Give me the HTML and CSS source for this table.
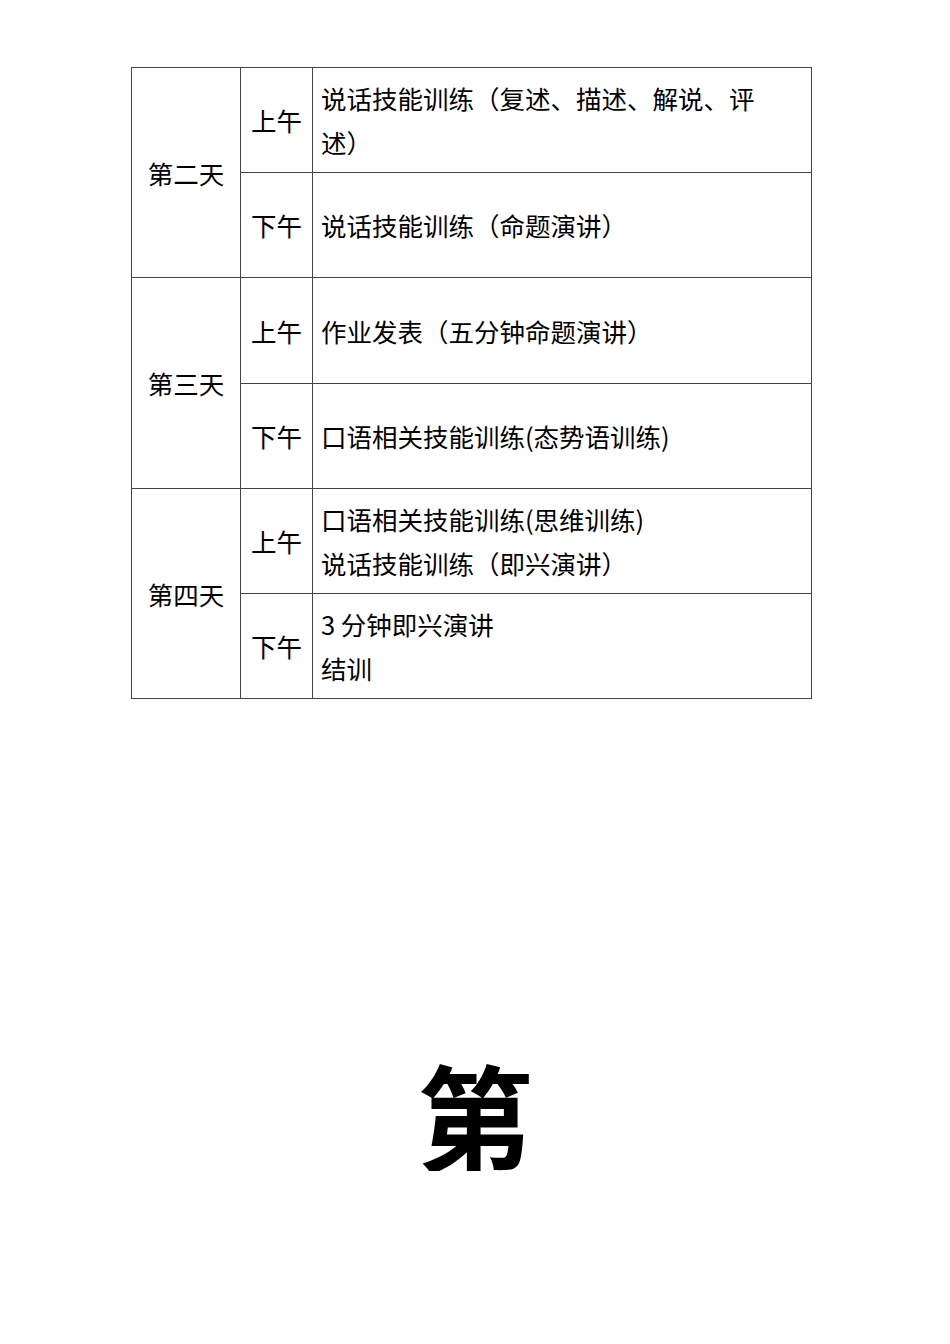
FILE: index.html
```html
<!DOCTYPE html>
<html lang="zh-CN">
<head>
<meta charset="utf-8">
<title>培训日程</title>
<link rel="stylesheet" href="styles.css">
</head>
<body>
<div class="page">
  <table class="schedule">
    <colgroup>
      <col class="c-day">
      <col class="c-half">
      <col class="c-content">
    </colgroup>
    <tbody>
      <tr>
        <td class="day" rowspan="2">第二天</td>
        <td class="half">上午</td>
        <td class="content"><p>说话技能训练（复述、描述、解说、评述）</p></td>
      </tr>
      <tr>
        <td class="half">下午</td>
        <td class="content"><p>说话技能训练（命题演讲）</p></td>
      </tr>
      <tr class="tall">
        <td class="day" rowspan="2">第三天</td>
        <td class="half">上午</td>
        <td class="content"><p>作业发表（五分钟命题演讲）</p></td>
      </tr>
      <tr>
        <td class="half">下午</td>
        <td class="content"><p>口语相关技能训练(态势语训练)</p></td>
      </tr>
      <tr>
        <td class="day" rowspan="2">第四天</td>
        <td class="half">上午</td>
        <td class="content"><p>口语相关技能训练(思维训练)</p><p>说话技能训练（即兴演讲）</p></td>
      </tr>
      <tr>
        <td class="half">下午</td>
        <td class="content"><p>3 分钟即兴演讲</p><p>结训</p></td>
      </tr>
    </tbody>
  </table>
  <div class="big">第</div>
</div>
</body>
</html>
```

FILE: styles.css
```css
html, body {
  margin: 0;
  padding: 0;
  background: #ffffff;
}

body {
  font-family: "Noto Sans CJK SC", "Noto Sans", sans-serif;
  color: #000000;
}

.page {
  width: 950px;
  padding-top: 67px;
}

.schedule {
  border-collapse: collapse;
  table-layout: fixed;
  width: 680px;
  margin-left: 131px;
  font-size: 25.5px;
  line-height: 44px;
}

.c-day { width: 109px; }
.c-half { width: 72px; }
.c-content { width: 499px; }

.schedule td {
  border: 1px solid #444444;
  height: 104px;
  padding: 0;
  vertical-align: middle;
}

.schedule .tall td {
  height: 105px;
}

.day,
.half {
  text-align: center;
}

.schedule td.content {
  padding: 0 36px 0 8px;
}

.content p {
  margin: 0;
}

.big {
  margin-top: 356px;
  text-align: center;
  font-size: 116px;
  line-height: 1;
  font-weight: 700;
}
```
